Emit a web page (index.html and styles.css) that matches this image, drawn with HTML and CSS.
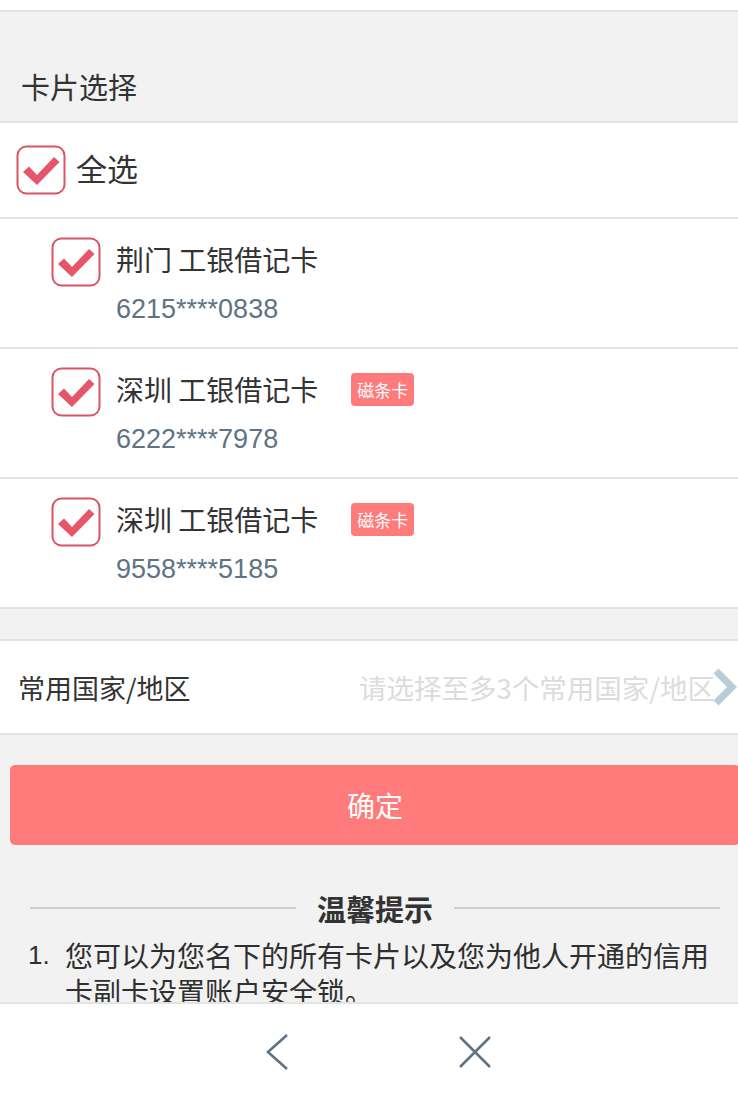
FILE: index.html
```html
<!DOCTYPE html>
<html lang="zh-CN">
<head>
  <meta charset="UTF-8">
  <meta name="viewport" content="width=device-width, initial-scale=1.0">
  <title>账户安全锁</title>
  <link rel="stylesheet" href="styles.css">
</head>
<body>
  <div class="top-strip"></div>

  <div class="section-title">卡片选择</div>

  <!-- 全选 -->
  <div class="row select-all">
    <span class="check">
      <svg viewBox="0 0 50 50"><rect x="1.5" y="1.5" width="47" height="47" rx="9" fill="none" stroke="#d95563" stroke-width="2"/><path d="M7 27 L13 21.5 L21 30 L38 12 L43.5 17 L21 40 Z" fill="#e5566a"/></svg>
    </span>
    <span class="all-label">全选</span>
  </div>

  <!-- 卡片列表 -->
  <div class="row card">
    <span class="check">
      <svg viewBox="0 0 50 50"><rect x="1.5" y="1.5" width="47" height="47" rx="9" fill="none" stroke="#d95563" stroke-width="2"/><path d="M7 27 L13 21.5 L21 30 L38 12 L43.5 17 L21 40 Z" fill="#e5566a"/></svg>
    </span>
    <div class="card-info">
      <div class="card-name">荆门 工银借记卡</div>
      <div class="card-no">6215****0838</div>
    </div>
  </div>

  <div class="row card">
    <span class="check">
      <svg viewBox="0 0 50 50"><rect x="1.5" y="1.5" width="47" height="47" rx="9" fill="none" stroke="#d95563" stroke-width="2"/><path d="M7 27 L13 21.5 L21 30 L38 12 L43.5 17 L21 40 Z" fill="#e5566a"/></svg>
    </span>
    <div class="card-info">
      <div class="card-name">深圳 工银借记卡 <span class="badge">磁条卡</span></div>
      <div class="card-no">6222****7978</div>
    </div>
  </div>

  <div class="row card">
    <span class="check">
      <svg viewBox="0 0 50 50"><rect x="1.5" y="1.5" width="47" height="47" rx="9" fill="none" stroke="#d95563" stroke-width="2"/><path d="M7 27 L13 21.5 L21 30 L38 12 L43.5 17 L21 40 Z" fill="#e5566a"/></svg>
    </span>
    <div class="card-info">
      <div class="card-name">深圳 工银借记卡 <span class="badge">磁条卡</span></div>
      <div class="card-no">9558****5185</div>
    </div>
  </div>

  <!-- 常用国家 -->
  <div class="country">
    <span class="country-label">常用国家/地区</span>
    <span class="country-hint">请选择至多3个常用国家/地区</span>
    <svg class="chevron" viewBox="0 0 26 40"><path d="M4 4 L20 20 L4 36" fill="none" stroke="#b9ccd5" stroke-width="7"/></svg>
  </div>

  <button class="confirm">确定</button>

  <!-- 温馨提示 -->
  <div class="tips">
    <div class="tips-title"><span>温馨提示</span></div>
    <div class="tip">
      <span class="tip-no">1.</span>
      <span class="tip-text">您可以为您名下的所有卡片以及您为他人开通的信用卡副卡设置账户安全锁。</span>
    </div>
    <div class="tip">
      <span class="tip-no">2.</span>
      <span class="tip-text">设置账户安全锁后，您的卡片在境外及常用国家/地区以外的交易将受到限制。</span>
    </div>
  </div>

  <!-- 底部导航 -->
  <div class="bottom-bar">
    <svg class="nav-back" viewBox="0 0 26 38"><path d="M23 2 L4 19 L23 36" fill="none" stroke="#5f7384" stroke-width="2.6"/></svg>
    <svg class="nav-close" viewBox="0 0 34 34"><path d="M2 2 L32 32 M32 2 L2 32" fill="none" stroke="#5f7384" stroke-width="2.6"/></svg>
  </div>
</body>
</html>
```

FILE: styles.css
```css
body {
  margin: 0;
  padding: 0;
  background: #f2f2f2;
  font-family: "Noto Sans CJK SC", "Noto Sans", sans-serif;
  color: #333;
  overflow: hidden;
}

.top-strip {
  height: 10px;
  background: #fff;
  border-bottom: 2px solid #e3e3e3;
}

.section-title {
  height: 111px;
  box-sizing: border-box;
  padding: 54px 0 0 21px;
  font-size: 29px;
  line-height: 40px;
  border-bottom: 2px solid #e3e3e3;
}

.row {
  display: flex;
  background: #fff;
  border-bottom: 2px solid #e3e3e3;
  box-sizing: border-box;
}

.check {
  display: block;
  width: 50px;
  height: 50px;
  flex: none;
}

.check svg {
  display: block;
  width: 50px;
  height: 50px;
}

.select-all {
  height: 96px;
  align-items: center;
  padding-left: 16px;
}

.all-label {
  margin-left: 10px;
  font-size: 31px;
  margin-top: -5px;
}

.card {
  height: 130px;
  padding: 18px 0 0 51px;
}

.card-info {
  margin-left: 15px;
}

.card-name {
  font-size: 28px;
  line-height: 44px;
  display: flex;
  align-items: center;
}

.badge {
  display: inline-block;
  margin-left: 33px;
  background: #ff7b7b;
  color: #fff;
  font-size: 17px;
  line-height: 33px;
  padding: 0 6px;
  border-radius: 4px;
}

.card-no {
  margin-top: 10px;
  font-family: "Liberation Sans", Arial, sans-serif;
  font-size: 27px;
  line-height: 36px;
  color: #5f7384;
}

.country {
  margin-top: 30px;
  height: 96px;
  background: #fff;
  border-top: 2px solid #e3e3e3;
  border-bottom: 2px solid #e3e3e3;
  display: flex;
  align-items: center;
  box-sizing: border-box;
  padding-left: 18px;
}

.country-label {
  font-size: 27px;
}

.country-hint {
  margin-left: auto;
  font-size: 27.5px;
  color: #dcdcdc;
}

.chevron {
  width: 26px;
  height: 40px;
  margin-left: -3px;
  flex: none;
}

.confirm {
  display: block;
  margin: 30px 0 0 10px;
  width: 730px;
  height: 80px;
  border: none;
  border-radius: 5px;
  background: #ff7b7b;
  color: #fff;
  font-family: inherit;
  font-size: 28px;
}

.tips {
  padding: 43px 18px 0 30px;
}

.tips-title {
  display: flex;
  align-items: center;
  font-size: 29px;
  font-weight: bold;
  line-height: 40px;
}

.tips-title::before,
.tips-title::after {
  content: "";
  flex: 1;
  height: 2px;
  background: #cfcfcf;
}

.tips-title span {
  padding: 0 21px;
}

.tip {
  display: flex;
  font-size: 28px;
  line-height: 36px;
  margin-top: 9px;
  color: #2f2f2f;
}

.tip-no {
  flex: none;
  width: 37px;
  margin-left: -2px;
  font-family: "Liberation Sans", Arial, sans-serif;
  font-size: 26px;
}

.bottom-bar {
  position: fixed;
  left: 0;
  right: 0;
  bottom: 0;
  height: 96px;
  background: #fff;
  border-top: 2px solid #e3e3e3;
  display: flex;
  align-items: center;
  padding-left: 264px;
  gap: 168px;
}

.nav-back {
  width: 26px;
  height: 38px;
}

.nav-close {
  width: 34px;
  height: 34px;
}
```
